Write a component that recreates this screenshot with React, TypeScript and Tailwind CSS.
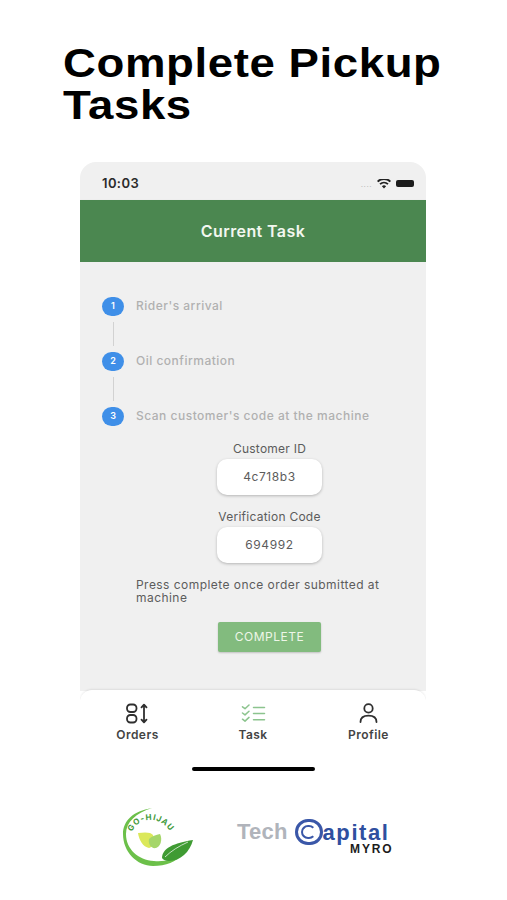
import { ReactNode } from "react";

const font = { fontFamily: 'Inter, "Liberation Sans", Arial, sans-serif' };
const logoFont = { fontFamily: '"Liberation Sans", Arial, sans-serif' };

function OrdersIcon() {
  return (
    <svg width="26" height="21" viewBox="0 0 26 21" fill="none" stroke="#2f2f2f" strokeWidth="1.8">
      <rect x="2" y="1.5" width="9.5" height="7.5" rx="3.4" />
      <rect x="2" y="12" width="9.5" height="7.5" rx="3.4" />
      <path d="M19 2v17M16.5 4.4 19 1.6l2.5 2.8M16.5 16.6l2.5 2.8 2.5-2.8" strokeLinecap="round" strokeLinejoin="round" />
    </svg>
  );
}

function TaskIcon() {
  return (
    <svg width="25" height="18" viewBox="0 0 25 18" fill="none" stroke="#8cc48e" strokeWidth="1.5" strokeLinecap="round" strokeLinejoin="round">
      <path d="M1.5 2.8l2.5 1.9L8 1M1.5 9l2.5 1.9L8 7.2M1.5 15.2 4 17.1 8 13.4" />
      <path d="M12.5 3.4h11M12.5 9.6h11M12.5 15.8h11" />
    </svg>
  );
}

function ProfileIcon() {
  return (
    <svg width="19" height="20" viewBox="0 0 19 20" fill="none" stroke="#2f2f2f" strokeWidth="1.8" strokeLinecap="round">
      <circle cx="9.5" cy="5.4" r="4.2" />
      <path d="M1.5 19c0-4.4 3.4-6.4 8-6.4s8 2 8 6.4" />
    </svg>
  );
}

function Step({ n, label }: { n: number; label: string }) {
  return (
    <div className="flex items-center h-[22px]">
      <div className="w-[22px] h-[19px] rounded-full bg-[#3f8fe8] text-white text-[9px] font-semibold flex items-center justify-center">
        {n}
      </div>
      <span className="ml-[12px] text-[12px] font-medium tracking-[0.5px] text-[#b0b0b0] whitespace-nowrap">{label}</span>
    </div>
  );
}

function Connector() {
  return <div className="w-px h-[24px] my-[4.5px] ml-[11px] bg-[#d2d2d2]" />;
}

function CodeBox({ label, value }: { label: string; value: string }) {
  return (
    <div className="flex flex-col items-center">
      <div className="text-[12px] leading-[14px] tracking-[0.25px] text-[#5c5c5c] whitespace-nowrap">{label}</div>
      <div className="mt-[3px] w-[105px] h-[36px] rounded-[10px] bg-white shadow-[0_1px_3px_rgba(0,0,0,0.25)] flex items-center justify-center text-[12px] tracking-[0.6px] text-[#5c5c5c]">
        {value}
      </div>
    </div>
  );
}

function NavItem({ icon, label }: { icon: ReactNode; label: string }) {
  return (
    <div className="flex flex-col items-center w-[115px]">
      <div className="h-[24px] flex items-center justify-center">{icon}</div>
      <div className="mt-[1px] text-[12px] font-semibold tracking-[0.45px] text-[#444444]">{label}</div>
    </div>
  );
}

function GoHijauLogo() {
  return (
    <svg width="74" height="62" viewBox="0 0 74 62">
      <path d="M31 1C12 4 2 14 2 27c0 18 14 32 30 32 13 0 23-4 30-12-8 5-18 8-29 7C17 53 5 42 5 27 5 15 15 6 31 1Z" fill="#6cc04a" />
      <defs>
        <path id="arc" d="M11 25C15 15 25 12 33 13 42 15 48 21 54 32" />
      </defs>
      <text fontSize="8" fontWeight="700" fill="#3f9a3a" letterSpacing="0.9">
        <textPath href="#arc">GO-HIJAU</textPath>
      </text>
      <path d="M17 26c7-1 13-1 15 2 2 6 0 12-4 13-6-1-10-8-11-15Z" fill="#dbe85a" />
      <path d="M28 32c3-3 7-4 11-5 3 6 0 13-4 14-5 1-8-4-7-9Z" fill="#a5d66a" />
      <path d="M41 51c0-10 12-15 31-18-3 12-13 21-24 21-3 0-6-1-7-3Z" fill="#3f9b33" />
      <path d="M44 50c6-6 14-11 23-15" stroke="#ffffff" strokeWidth="0.7" fill="none" />
    </svg>
  );
}

function TechCapitalLogo() {
  return (
    <div style={logoFont} className="relative w-[166px] h-[36px]">
      <div className="flex items-center h-[24px] pl-[8px]">
        <span className="text-[22px] leading-[20px] font-bold tracking-[0.2px] text-[#b0b4bb]">Tech</span>
        <span className="w-[28px] h-[26px] ml-[7px] rounded-full border-[3px] border-[#3a57a8] flex items-center justify-center shrink-0">
          <span className="w-[15px] h-[14px] rounded-full border-[2.5px] border-[#3a57a8] border-r-transparent" />
        </span>
        <span className="text-[22px] leading-[19px] font-bold tracking-[1.6px] text-[#2f4f9f]">apital</span>
      </div>
      <div className="absolute left-[121px] top-[24px] text-[12px] leading-[11px] tracking-[1.9px] font-bold text-[#1c1c1c]">MYRO</div>
    </div>
  );
}

export default function App() {
  return (
    <div style={font} className="relative w-[507px] h-[900px] bg-white overflow-hidden flex flex-col">
      <h1
        style={logoFont}
        className="mt-[42px] ml-[63px] text-[40px] leading-[42px] font-bold tracking-[0.5px] text-black whitespace-nowrap origin-left scale-x-[1.14]"
      >
        Complete Pickup
        <br />
        Tasks
      </h1>

      <div className="mt-[36px] mx-[80px] w-[346px] h-[618px] rounded-t-[16px] overflow-hidden flex flex-col bg-white shrink-0">
        <div className="h-[38px] bg-[#f0f0f0] flex items-center justify-between pl-[22px] pr-[12px] pt-[5px] shrink-0">
          <span className="text-[13px] font-semibold tracking-[0.4px] text-[#2a2a2a]">10:03</span>
          <div className="flex items-center gap-[5px]">
            <span className="text-[8px] leading-[8px] tracking-[0.5px] text-[#b8b8b8]">....</span>
            <svg width="14" height="10" viewBox="0 0 14 10" fill="#222222">
              <path d="M7 9.6 4.9 7.2a3 3 0 0 1 4.2 0L7 9.6ZM3.6 5.8 2.4 4.4a7 7 0 0 1 9.2 0l-1.2 1.4a5 5 0 0 0-6.8 0ZM1.3 3.2 0 1.9a10 10 0 0 1 14 0l-1.3 1.3a8.4 8.4 0 0 0-11.4 0Z" />
            </svg>
            <div className="w-[18px] h-[7px] rounded-[2px] bg-[#1c1c1c]" />
          </div>
        </div>

        <div className="h-[62px] bg-[#4b8750] flex items-center justify-center text-[16px] font-semibold tracking-[0.4px] text-[#f2f7ef] shrink-0 shadow-[0_1px_2px_rgba(0,0,0,0.2)]">
          Current Task
        </div>

        <div className="flex-1 bg-[#f0f0f0] pt-[33px] flex flex-col">
          <div className="ml-[22px] flex flex-col">
            <Step n={1} label="Rider's arrival" />
            <Connector />
            <Step n={2} label="Oil confirmation" />
            <Connector />
            <Step n={3} label="Scan customer's code at the machine" />
          </div>

          <div className="mt-[15px] ml-[137px] w-[105px] flex flex-col gap-[15px] items-center">
            <CodeBox label="Customer ID" value="4c718b3" />
            <CodeBox label="Verification Code" value="694992" />
          </div>

          <p className="mt-[15px] ml-[56px] w-[255px] text-[12px] leading-[13px] tracking-[0.45px] text-[#5c5c5c]">
            Press complete once order submitted at machine
          </p>

          <div className="mt-[18px] ml-[138px] w-[103px] h-[30px] rounded-[2px] bg-[#82bb7e] flex items-center justify-center text-[12px] tracking-[0.5px] text-[#eef6e8] shadow-[0_1px_2px_rgba(0,0,0,0.2)]">
            COMPLETE
          </div>
        </div>

        <div className="h-[90px] bg-white rounded-t-[12px] -mt-[1px] shadow-[0_-1px_2px_rgba(0,0,0,0.08)] flex flex-col shrink-0 relative">
          <div className="flex justify-between pt-[11px]">
            <NavItem icon={<OrdersIcon />} label="Orders" />
            <NavItem icon={<TaskIcon />} label="Task" />
            <NavItem icon={<ProfileIcon />} label="Profile" />
          </div>
          <div className="mt-[23px] mx-auto w-[123px] h-[4px] rounded-full bg-black" />
        </div>
      </div>

      <div className="flex items-center pl-[121px] gap-[34px] absolute top-[807px] left-0">
        <GoHijauLogo />
        <TechCapitalLogo />
      </div>
    </div>
  );
}
